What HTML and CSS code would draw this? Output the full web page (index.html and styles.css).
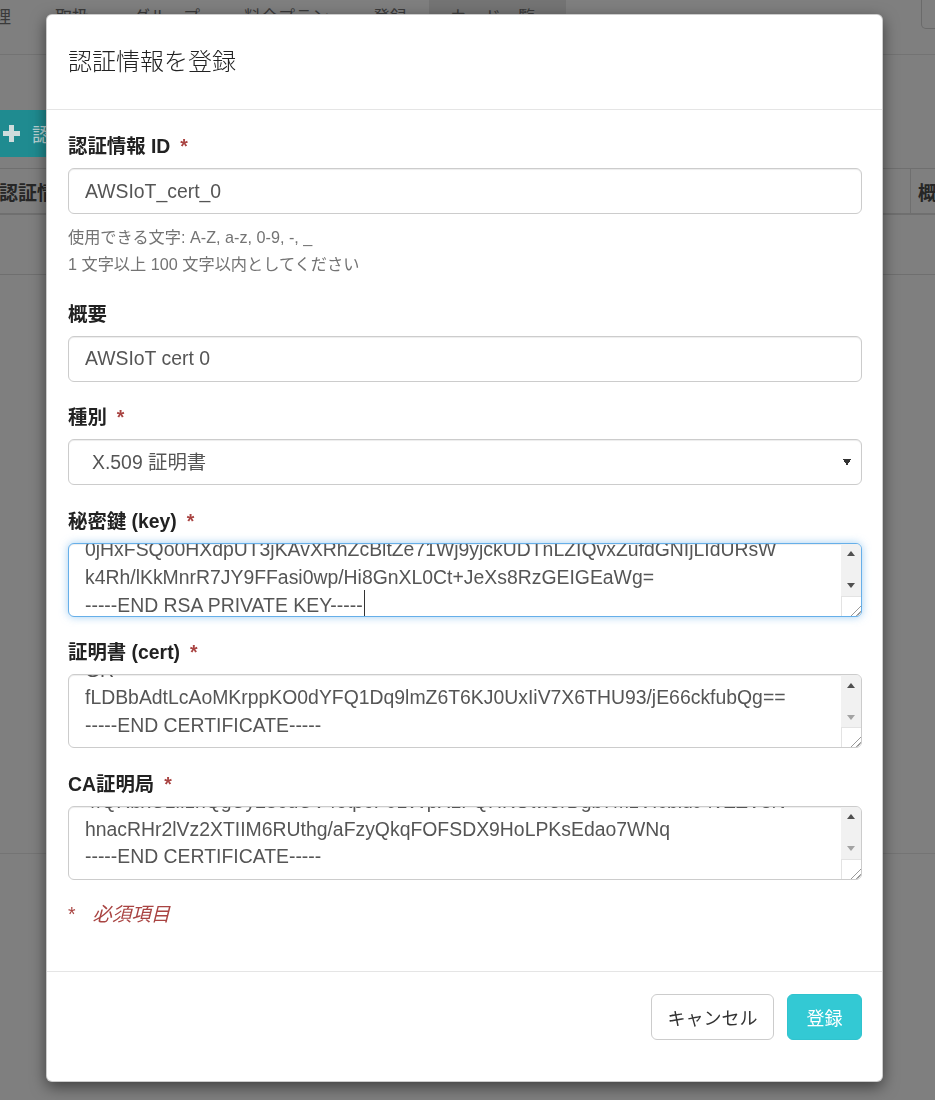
FILE: index.html
```html
<!DOCTYPE html>
<html lang="ja">
<head>
<meta charset="utf-8">
<title>認証情報を登録</title>
<link rel="stylesheet" href="styles.css">
</head>
<body>
<div class="page">
  <nav class="topnav">
    <span class="tab tab-first">管理</span>
    <span class="tab">取扱</span>
    <span class="tab">グループ</span>
    <span class="tab">料金プラン</span>
    <span class="tab">登録</span>
    <span class="tab tab-active">カード一覧</span>
    <span class="nav-spacer"></span>
    <span class="nav-box"></span>
  </nav>
  <div class="content">
    <div class="add-btn"><span class="plus"></span><span class="add-text">認証情報を追加</span></div>
    <div class="table">
      <div class="thead"><span class="th th-main">認証情報 ID</span><span class="th th-side">概要</span></div>
      <div class="trow"></div>
    </div>
    <div class="section-line"></div>
  </div>
</div>

<div class="backdrop">
  <div class="modal">
    <div class="modal-header">
      <h4 class="modal-title">認証情報を登録</h4>
    </div>
    <div class="modal-body">
      <div class="form-group">
        <label class="control-label">認証情報 ID<span class="req">*</span></label>
        <input class="form-control" type="text" value="AWSIoT_cert_0">
        <div class="help-block">使用できる文字: A-Z, a-z, 0-9, -, _<br>1 文字以上 100 文字以内としてください</div>
      </div>
      <div class="form-group">
        <label class="control-label">概要</label>
        <input class="form-control" type="text" value="AWSIoT cert 0">
      </div>
      <div class="form-group">
        <label class="control-label">種別<span class="req">*</span></label>
        <select class="form-control select"><option>X.509 証明書</option></select>
      </div>
      <div class="form-group">
        <label class="control-label">秘密鍵 (key)<span class="req">*</span></label>
        <div class="ta-wrap">
          <textarea id="key" class="form-control textarea is-focused">-----BEGIN RSA PRIVATE KEY-----
MIIEowIBAAKCAQEAuV3kQpX8mN2cJfT0aLrB7sWq9HdYgE4oZ1vKcP6iUyGxM5nR
Tj8bLwQa2sDfV0hKe7pN3mYcXuI4oG9rB1zS6tWqA5dHjLkE8vFnM2xCyP7bRgT0
u3QaZs9WkYx1NcVe6LpB4oJh8GmD2fTr5KwXy0iA7nUqSbE3lHgC9vMjO1dPzRtF
0jHxFSQo0HXdpUT3jKAvXRhZcBltZe71Wj9yjckUDTnLZIQvxZufdGNIjLIdURsW
k4Rh/lKkMnrR7JY9FFasi0wp/Hi8GnXL0Ct+JeXs8RzGEIGEaWg=
-----END RSA PRIVATE KEY-----</textarea>
          <span class="caret"></span>
          <div class="vscroll">
            <div class="sb-btn"><span class="tri-up"></span></div>
            <div class="sb-track"></div>
            <div class="sb-btn"><span class="tri-down"></span></div>
            <div class="sb-resizer"></div>
          </div>
        </div>
      </div>
      <div class="form-group">
        <label class="control-label">証明書 (cert)<span class="req">*</span></label>
        <div class="ta-wrap">
          <textarea class="form-control textarea">-----BEGIN CERTIFICATE-----
MIIDWTCCAkGgAwIBAgIUe3pLx2m9Hq0ZcTfR8vYwN4sKbJAwDQYJKoZIhvcNAQEL
BQAwTTFLMEkGA1UECwxCQW1hem9uIFdlYiBTZXJ2aWNlcyBPPUFtYXpvbi5jb20g
AbE0KpS1VdX2YeA3BgE4KhP5SnV6XoY7ApB8EqK9PuS0VaX1YbA2BdE3KeP4sgGR
fLDBbAdtLcAoMKrppKO0dYFQ1Dq9lmZ6T6KJ0UxIiV7X6THU93/jE66ckfubQg==
-----END CERTIFICATE-----</textarea>
          <div class="vscroll">
            <div class="sb-btn"><span class="tri-up"></span></div>
            <div class="sb-track"></div>
            <div class="sb-btn"><span class="tri-down is-disabled"></span></div>
            <div class="sb-resizer"></div>
          </div>
        </div>
      </div>
      <div class="form-group">
        <label class="control-label">CA証明局<span class="req">*</span></label>
        <div class="ta-wrap">
          <textarea class="form-control textarea">-----BEGIN CERTIFICATE-----
MIIE0zCCA7ugAwIBAgIQGNrRniZ96LtKIVjNzGs7SjANBgkqhkiG9w0BAQUFADCB
p6B4Eq1iDkVwZMXnl2YtmAl+X6/WzChl8gGqCBpH3vn5fJJaCGkgDdk+bW48DW7Y
5gaRQBi5+MHt39tBquCWIMnNZBU4gcmU7qKEKQsTb47bDN0lAtukixlE0kF6BWlK
WE9gyn6CagsCqiUXObXbf+eEZSqVir2G3l6BFoMtEMze/aiCKm0oHw0LxOXnGiYZ
4fQRbxC1lfznQgUy286dUV4otp6F01vvpX1FQHKOtw5rDgb7MzVIcbidJ4vEZV8N
hnacRHr2lVz2XTIIM6RUthg/aFzyQkqFOFSDX9HoLPKsEdao7WNq
-----END CERTIFICATE-----</textarea>
          <div class="vscroll">
            <div class="sb-btn"><span class="tri-up"></span></div>
            <div class="sb-track"></div>
            <div class="sb-btn"><span class="tri-down is-disabled"></span></div>
            <div class="sb-resizer"></div>
          </div>
        </div>
      </div>
      <p class="required-note"><span class="req-mark">*</span><span class="req-text">必須項目</span></p>
    </div>
    <div class="modal-footer">
      <button class="btn btn-default" type="button">キャンセル</button>
      <button class="btn btn-primary" type="button">登録</button>
    </div>
  </div>
</div>
<script src="script.js"></script>
</body>
</html>
```

FILE: styles.css
```css
html, body {
  margin: 0;
  padding: 0;
  height: 1100px;
  overflow: hidden;
}

body {
  background: #7f7f7f;
  font-family: "Liberation Sans", "Noto Sans CJK JP", sans-serif;
  color: #333;
}

.page {
  height: 1100px;
  overflow: hidden;
}

/* ---------- dimmed page behind the dialog ---------- */
.topnav {
  display: flex;
  height: 54px;
  border-bottom: 1px solid #737373;
  font-size: 17px;
  line-height: 22px;
  color: #3a3a3a;
  white-space: nowrap;
}

.tab {
  padding: 7px 22px 0;
}

.tab-first {
  margin-left: -45px;
}

.tab-active {
  background: #747474;
  padding: 7px 31px 0 21px;
}

.nav-spacer {
  flex: 1;
}

.nav-box {
  width: 40px;
  height: 30px;
  margin-right: -26px;
  margin-top: -1px;
  border: 1px solid #6a6a6a;
  border-top: none;
  border-radius: 0 0 0 5px;
  box-sizing: border-box;
}

.content {
  padding-top: 55px;
}

.add-btn {
  display: flex;
  align-items: center;
  gap: 12px;
  width: 240px;
  height: 47px;
  margin-left: -12px;
  padding-left: 15px;
  box-sizing: border-box;
  background: #1f8b90;
  border-radius: 4px;
  color: #b9d2d3;
  font-size: 19px;
}

.plus {
  width: 17px;
  height: 17px;
  background:
    linear-gradient(#cfdcdc, #cfdcdc) center / 17px 5px no-repeat,
    linear-gradient(#cfdcdc, #cfdcdc) center / 5px 17px no-repeat;
}

.table {
  margin-top: 11px;
  width: 1000px;
}

.thead {
  display: flex;
  height: 44px;
  border-top: 1px solid #6f6f6f;
  border-bottom: 2px solid #6f6f6f;
  font-weight: bold;
  font-size: 19px;
  color: #262626;
}

.th {
  display: flex;
  align-items: center;
  white-space: nowrap;
}

.th-main {
  flex: 0 0 911px;
  margin-left: -1px;
}

.th-side {
  border-left: 1px solid #6f6f6f;
  padding-left: 7px;
}

.trow {
  height: 59px;
  border-bottom: 1px solid #6f6f6f;
}

.section-line {
  margin-top: 578px;
  border-top: 1px solid #747474;
}

/* ---------- dialog ---------- */
.backdrop {
  position: fixed;
  inset: 0;
}

.modal {
  width: 837px;
  margin: 14px 0 0 46px;
  box-sizing: border-box;
  background: #fff;
  border: 1px solid rgba(0, 0, 0, 0.2);
  border-radius: 6px;
  box-shadow: 0 5px 15px rgba(0, 0, 0, 0.5);
}

.modal-header {
  padding: 28px 20px 32px 21px;
  border-bottom: 1px solid #e5e5e5;
}

.modal-title {
  margin: 0;
  font-family: "Noto Sans CJK JP", sans-serif;
  font-weight: 300;
  font-size: 24px;
  line-height: 34px;
  color: #222;
}

.modal-body {
  padding: 23px 20px 22px 21px;
}

.form-group {
  margin-bottom: 22.5px;
}

.control-label {
  display: block;
  margin-bottom: 9px;
  font-weight: bold;
  font-size: 19.4px;
  line-height: 26px;
  color: #222;
}

.req {
  margin-left: 10px;
  color: #a94442;
}

.form-control {
  display: block;
  width: 100%;
  height: 46px;
  margin: 0;
  padding: 10px 16px;
  box-sizing: border-box;
  font-family: "Liberation Sans", "Noto Sans CJK JP", sans-serif;
  font-size: 19.4px;
  line-height: 24px;
  color: #555;
  background: #fff;
  border: 1px solid #ccc;
  border-radius: 6px;
  box-shadow: inset 0 1px 1px rgba(0, 0, 0, 0.075);
}

.form-control:focus {
  outline: none;
}

.select {
  appearance: none;
  -webkit-appearance: none;
  padding-left: 23px;
  background-image: conic-gradient(from -30deg at 50% 100%, #333 60deg, transparent 0);
  background-repeat: no-repeat;
  background-size: 8px 7px;
  background-position: right 10px center;
}

.ta-wrap {
  position: relative;
}

.textarea {
  height: 74px;
  padding: 6px 36px 7px 16px;
  line-height: 27.7px;
  resize: none;
  overflow-y: scroll;
}

.is-focused {
  border-color: #66afe9;
  box-shadow: inset 0 1px 1px rgba(0, 0, 0, 0.075), 0 0 8px rgba(102, 175, 233, 0.6);
  caret-color: #333;
}

/* text cursor at the end of the focused key */
.caret {
  position: absolute;
  left: 296px;
  top: 47px;
  width: 1px;
  height: 26px;
  background: #333;
  pointer-events: none;
}

/* drawn scrollbar column of the textareas */
.vscroll {
  position: absolute;
  top: 1px;
  right: 1px;
  bottom: 1px;
  width: 20px;
  display: flex;
  flex-direction: column;
  background: #f1f1f1;
  border-radius: 0 5px 5px 0;
  overflow: hidden;
  pointer-events: none;
}

.sb-btn {
  height: 20px;
  display: flex;
  align-items: center;
  justify-content: center;
}

.sb-track {
  flex: 1;
}

.tri-up {
  width: 0;
  height: 0;
  border-left: 4.5px solid transparent;
  border-right: 4.5px solid transparent;
  border-bottom: 5px solid #505050;
}

.tri-down {
  width: 0;
  height: 0;
  border-left: 4.5px solid transparent;
  border-right: 4.5px solid transparent;
  border-top: 5px solid #505050;
}

.tri-down.is-disabled {
  border-top-color: #a3a3a3;
}

.sb-resizer {
  height: 20px;
  box-sizing: border-box;
  border-top: 1px solid #e3e3e3;
  border-left: 1px solid #e3e3e3;
  background:
    linear-gradient(135deg, transparent 0 72%, #9a9a9a 72% 76%, transparent 76% 86%, #9a9a9a 86% 90%, transparent 90%),
    #fff;
}

.help-block {
  margin-top: 10px;
  font-size: 16.2px;
  line-height: 27px;
  color: #737373;
}

.required-note {
  display: flex;
  gap: 17px;
  margin: 0 0 23px;
  font-size: 19.4px;
  line-height: 24px;
  color: #a94442;
}

.req-text {
  font-style: italic;
}

.modal-footer {
  display: flex;
  justify-content: flex-end;
  gap: 13px;
  padding: 22px 20px 41px;
  border-top: 1px solid #e5e5e5;
}

.btn {
  height: 46px;
  padding: 0;
  font-family: "Noto Sans CJK JP", sans-serif;
  font-size: 18px;
  border-radius: 6px;
  border: 1px solid transparent;
  cursor: pointer;
}

.btn-default {
  width: 123px;
  color: #333;
  background: #fff;
  border-color: #ccc;
}

.btn-primary {
  width: 75px;
  color: #fff;
  background: #33c9d4;
  border-color: #30c3ce;
}
```

FILE: script.js
```js
document.querySelectorAll('.textarea').forEach(function (t) {
  t.scrollTop = t.scrollHeight;
});
var k = document.getElementById('key');
k.focus();
var n = k.value.length;
k.setSelectionRange(n, n);
k.scrollTop = k.scrollHeight - k.clientHeight - 11;
```
